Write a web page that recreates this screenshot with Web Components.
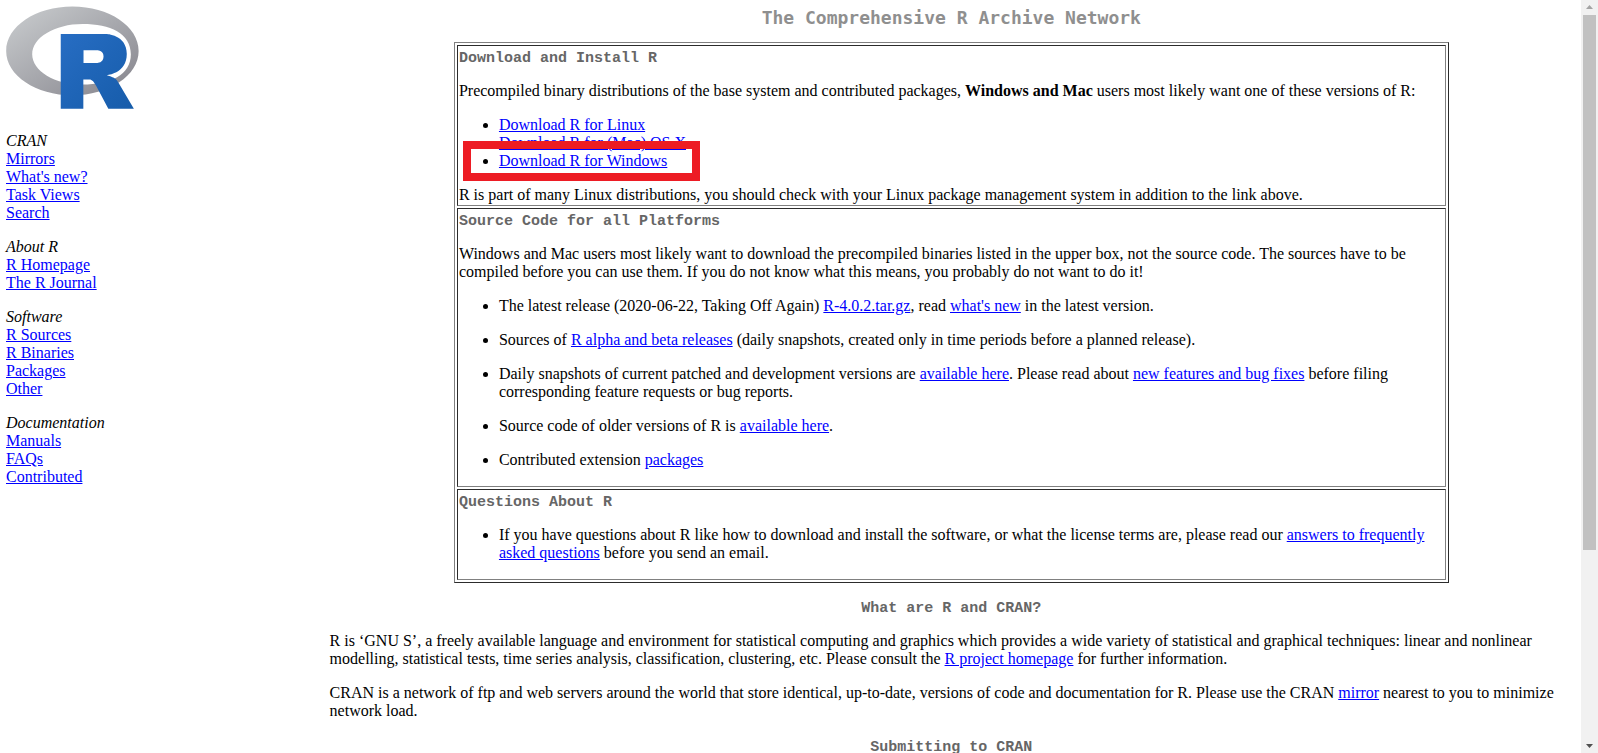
<!DOCTYPE html>
<html lang="en">
<head>
<meta charset="utf-8">
<title>The Comprehensive R Archive Network</title>
<style>
  html, body { margin: 0; height: 100%; overflow: hidden; background: #fff; }
  body { font: 16px/18px "Liberation Serif", "Times New Roman", serif; color: #000; }
</style>
</head>
<body>
<cran-page></cran-page>

<template id="page-template">
  <style>
    :host { display: grid; grid-template-columns: 1fr 4fr; height: 100vh; overflow: hidden; }
    .content { display: flex; min-width: 0; min-height: 0; }
    cran-main { flex: 1; min-width: 0; }
  </style>
  <cran-sidebar></cran-sidebar>
  <div class="content">
    <cran-main></cran-main>
    <scroll-track></scroll-track>
  </div>
</template>

<template id="sidebar-template">
  <style>
    :host { display: block; padding: 6px; }
    a { color: #00f; }
    r-logo { margin-bottom: 23px; }
  </style>
  <r-logo></r-logo>
  <nav>
    <nav-group label="CRAN"><a href="#mirrors">Mirrors</a><a href="#news">What's new?</a><a href="#views">Task Views</a><a href="#search">Search</a></nav-group>
    <nav-group label="About R"><a href="#home">R Homepage</a><a href="#journal">The R Journal</a></nav-group>
    <nav-group label="Software"><a href="#sources">R Sources</a><a href="#binaries">R Binaries</a><a href="#packages">Packages</a><a href="#other">Other</a></nav-group>
    <nav-group label="Documentation"><a href="#manuals">Manuals</a><a href="#faqs">FAQs</a><a href="#contributed">Contributed</a></nav-group>
  </nav>
</template>

<template id="group-template">
  <style>
    :host { display: flex; flex-direction: column; align-items: flex-start; margin-bottom: 16px; }
  </style>
  <em></em>
  <slot></slot>
</template>

<template id="logo-template">
  <style>
    :host { display: block; width: 133px; height: 103px; }
    svg { display: block; width: 100%; height: 100%; }
  </style>
  <svg viewBox="0 0 724 561" preserveAspectRatio="none" role="img" aria-label="R logo">
    <defs>
      <linearGradient id="ring" x1="0" y1="0" x2="1" y2="1"><stop offset="0" stop-color="#cbced0"/><stop offset="1" stop-color="#84838b"/></linearGradient>
      <linearGradient id="letter" x1="0" y1="0" x2="1" y2="1"><stop offset="0" stop-color="#276dc3"/><stop offset="1" stop-color="#165caa"/></linearGradient>
    </defs>
    <path fill="url(#ring)" fill-rule="evenodd" d="M361.453,485.937C162.329,485.937,0.906,377.828,0.906,244.469C0.906,111.109,162.329,3,361.453,3C560.578,3,722,111.109,722,244.469C722,377.828,560.578,485.937,361.453,485.937ZM416.641,97.406C265.289,97.406,142.594,171.314,142.594,262.484C142.594,353.654,265.289,427.562,416.641,427.562C567.992,427.562,679.687,377.033,679.687,262.484C679.687,147.971,567.992,97.406,416.641,97.406Z"/>
    <path fill="url(#letter)" fill-rule="evenodd" d="M550,377C550,377,571.822,383.585,584.5,390C588.899,392.226,596.51,396.668,602,402.5C607.378,408.212,610,414,610,414L696,559L557,559.062L492,437C492,437,478.69,414.131,470.5,407.5C463.668,401.969,460.755,400,454,400C449.298,400,420.974,400,420.974,400L421,558.974L298,559.026L298,152.938L545,152.938C545,152.938,657.5,154.967,657.5,262C657.5,369.033,550,377,550,377ZM496.5,241.024L422.037,240.976L422,310.026L496.5,310.002C496.5,310.002,531,309.895,531,274.877C531,239.155,496.5,241.024,496.5,241.024Z"/>
  </svg>
</template>

<template id="heading-template">
  <style>
    :host { display: block; margin-bottom: 16px; }
    h1, h2 { margin: 0; font-weight: bold; }
    h1 { font-family: "DejaVu Sans Mono", monospace; font-size: 18px; line-height: 23px; color: #8f8f8f; text-align: center; }
    h2 { padding-top: 2px; font-family: "Liberation Mono", monospace; font-size: 15px; line-height: 19px; color: #666; }
    :host([centered]) h2 { text-align: center; }
  </style>
</template>

<template id="mark-template">
  <style>
    :host { position: relative; display: inline-block; }
    .frame { position: absolute; inset: -11px -33px -11px -36px; border: 8px solid #ed1c24; pointer-events: none; }
  </style>
  <slot></slot><span class="frame"></span>
</template>

<template id="main-template">
  <style>
    :host { display: block; padding: 6px 8px 0 10px; overflow: hidden; }
    a { color: #00f; }
    p { margin: 16px 0; }
    ul { margin: 16px 0; padding-left: 40px; }
    cran-heading { margin-bottom: 14px; }
    cran-heading + p, cran-heading + ul { margin-top: 0; }
    .title { margin-bottom: 13px; }
    table { width: 80%; margin: 0 auto 14px; border: 1px solid; border-color: #808080 #2c2c2c #2c2c2c #808080; border-spacing: 2px; }
    td { padding: 1px; border: 1px solid; border-color: #2c2c2c #808080 #808080 #2c2c2c; }
    td > p:last-child { margin-bottom: 0; }
  </style>
  <cran-heading class="title" level="1">The Comprehensive R Archive Network</cran-heading>
  <table>
    <tr><td>
      <cran-heading>Download and Install R</cran-heading>
      <p>Precompiled binary distributions of the base system and contributed packages, <strong>Windows and Mac</strong> users most likely want one of these versions of R:</p>
      <ul>
        <li><a href="#linux">Download R for Linux</a></li>
        <li><a href="#macosx">Download R for (Mac) OS X</a></li>
        <li><link-mark><a href="#windows">Download R for Windows</a></link-mark></li>
      </ul>
      <p>R is part of many Linux distributions, you should check with your Linux package management system in addition to the link above.</p>
    </td></tr>
    <tr><td>
      <cran-heading>Source Code for all Platforms</cran-heading>
      <p>Windows and Mac users most likely want to download the precompiled binaries listed in the upper box, not the source code. The sources have to be compiled before you can use them. If you do not know what this means, you probably do not want to do it!</p>
      <ul>
        <li><p>The latest release (2020-06-22, Taking Off Again) <a href="#tar">R-4.0.2.tar.gz</a>, read <a href="#new">what's new</a> in the latest version.</p></li>
        <li><p>Sources of <a href="#alpha">R alpha and beta releases</a> (daily snapshots, created only in time periods before a planned release).</p></li>
        <li><p>Daily snapshots of current patched and development versions are <a href="#daily">available here</a>. Please read about <a href="#fixes">new features and bug fixes</a> before filing corresponding feature requests or bug reports.</p></li>
        <li><p>Source code of older versions of R is <a href="#older">available here</a>.</p></li>
        <li><p>Contributed extension <a href="#packages">packages</a></p></li>
      </ul>
    </td></tr>
    <tr><td>
      <cran-heading>Questions About R</cran-heading>
      <ul>
        <li>If you have questions about R like how to download and install the software, or what the license terms are, please read our <a href="#faq">answers to frequently asked questions</a> before you send an email.</li>
      </ul>
    </td></tr>
  </table>
  <cran-heading centered>What are R and CRAN?</cran-heading>
  <p>R is ‘GNU S’, a freely available language and environment for statistical computing and graphics which provides a wide variety of statistical and graphical techniques: linear and nonlinear modelling, statistical tests, time series analysis, classification, clustering, etc. Please consult the <a href="#project">R project homepage</a> for further information.</p>
  <p>CRAN is a network of ftp and web servers around the world that store identical, up-to-date, versions of code and documentation for R. Please use the CRAN <a href="#mirror">mirror</a> nearest to you to minimize network load.</p>
  <cran-heading centered>Submitting to CRAN</cran-heading>
</template>

<template id="scroll-template">
  <style>
    :host { display: flex; flex-direction: column; width: 17px; background: #f1f1f1; }
    svg { display: block; width: 17px; height: 15px; flex: none; }
    .rail { flex: 1; padding: 0 2px; }
    .thumb { height: 74%; background: #c1c1c1; }
  </style>
  <svg viewBox="0 0 17 15"><path d="M5 9h7L8.500 5z" fill="#a3a3a3"/></svg>
  <div class="rail"><div class="thumb"></div></div>
  <svg viewBox="0 0 17 15"><path d="M5 6h7l-3.500 4z" fill="#505050"/></svg>
</template>

<script>
  class TemplateElement extends HTMLElement {
    constructor() {
      super();
      this.attachShadow({ mode: "open" })
        .append(document.getElementById(this.constructor.template).content.cloneNode(true));
    }
  }
  customElements.define("r-logo", class extends TemplateElement { static template = "logo-template"; });
  customElements.define("link-mark", class extends TemplateElement { static template = "mark-template"; });
  customElements.define("scroll-track", class extends TemplateElement { static template = "scroll-template"; });
  customElements.define("nav-group", class extends TemplateElement {
    static template = "group-template";
    connectedCallback() { this.shadowRoot.querySelector("em").textContent = this.getAttribute("label"); }
  });
  customElements.define("cran-heading", class extends TemplateElement {
    static template = "heading-template";
    connectedCallback() {
      if (this.shadowRoot.querySelector("slot")) return;
      const heading = document.createElement(this.getAttribute("level") === "1" ? "h1" : "h2");
      heading.append(document.createElement("slot"));
      this.shadowRoot.append(heading);
    }
  });
  customElements.define("cran-sidebar", class extends TemplateElement { static template = "sidebar-template"; });
  customElements.define("cran-main", class extends TemplateElement { static template = "main-template"; });
  customElements.define("cran-page", class extends TemplateElement { static template = "page-template"; });
</script>
</body>
</html>
